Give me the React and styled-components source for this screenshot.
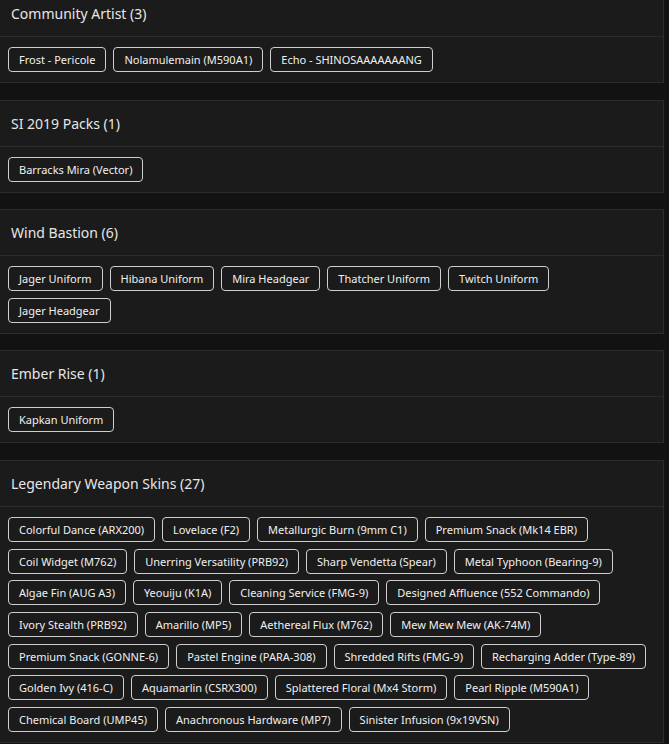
import styled, { createGlobalStyle } from 'styled-components';

const sections = [
  {
    title: 'Community Artist',
    items: ['Frost - Pericole', 'Nolamulemain (M590A1)', 'Echo - SHINOSAAAAAAANG'],
  },
  {
    title: 'SI 2019 Packs',
    items: ['Barracks Mira (Vector)'],
  },
  {
    title: 'Wind Bastion',
    items: ['Jager Uniform', 'Hibana Uniform', 'Mira Headgear', 'Thatcher Uniform', 'Twitch Uniform', 'Jager Headgear'],
  },
  {
    title: 'Ember Rise',
    items: ['Kapkan Uniform'],
  },
  {
    title: 'Legendary Weapon Skins',
    items: [
      'Colorful Dance (ARX200)',
      'Lovelace (F2)',
      'Metallurgic Burn (9mm C1)',
      'Premium Snack (Mk14 EBR)',
      'Coil Widget (M762)',
      'Unerring Versatility (PRB92)',
      'Sharp Vendetta (Spear)',
      'Metal Typhoon (Bearing-9)',
      'Algae Fin (AUG A3)',
      'Yeouiju (K1A)',
      'Cleaning Service (FMG-9)',
      'Designed Affluence (552 Commando)',
      'Ivory Stealth (PRB92)',
      'Amarillo (MP5)',
      'Aethereal Flux (M762)',
      'Mew Mew Mew (AK-74M)',
      'Premium Snack (GONNE-6)',
      'Pastel Engine (PARA-308)',
      'Shredded Rifts (FMG-9)',
      'Recharging Adder (Type-89)',
      'Golden Ivy (416-C)',
      'Aquamarlin (CSRX300)',
      'Splattered Floral (Mx4 Storm)',
      'Pearl Ripple (M590A1)',
      'Chemical Board (UMP45)',
      'Anachronous Hardware (MP7)',
      'Sinister Infusion (9x19VSN)',
    ],
  },
];

function App() {
  return (
    <>
      <GlobalStyle />
      <Page>
        {sections.map((s) => (
          <Card key={s.title}>
            <CardHeader>
              <CardTitle>
                {s.title} ({s.items.length})
              </CardTitle>
            </CardHeader>
            <ChipList>
              {s.items.map((item) => (
                <Chip key={item}>{item}</Chip>
              ))}
            </ChipList>
          </Card>
        ))}
      </Page>
    </>
  );
}

export default App;

const GlobalStyle = createGlobalStyle`
  html, body {
    margin: 0;
    padding: 0;
    background: #121212;
    overflow: hidden;
  }
  body {
    font-family: 'Noto Sans', 'Open Sans', sans-serif;
    color: #e8e8e8;
  }
`;

const Page = styled.div`
  width: 665px;
  margin-left: -1px;
  margin-top: -10px;
  display: flex;
  flex-direction: column;
  gap: 16.6px;
`;

const Card = styled.section`
  background: #1b1b1b;
  border: 1px solid #2c2c2c;
`;

const CardHeader = styled.div`
  height: 45px;
  padding-left: 11px;
  display: flex;
  align-items: center;
  border-bottom: 1px solid #2c2c2c;
`;

const CardTitle = styled.h3`
  margin: 0;
  font-size: 14px;
  font-weight: 400;
  color: #e6e6e6;
`;

const ChipList = styled.div`
  display: flex;
  flex-wrap: wrap;
  gap: 6.67px 7px;
  padding: 10px 10px 10px 8px;
`;

const Chip = styled.span`
  height: 25px;
  box-sizing: border-box;
  padding: 0 10px;
  display: inline-flex;
  align-items: center;
  border: 1px solid #cfcfcf;
  border-radius: 4px;
  font-size: 11px;
  color: #f0f0f0;
  white-space: nowrap;
`;
